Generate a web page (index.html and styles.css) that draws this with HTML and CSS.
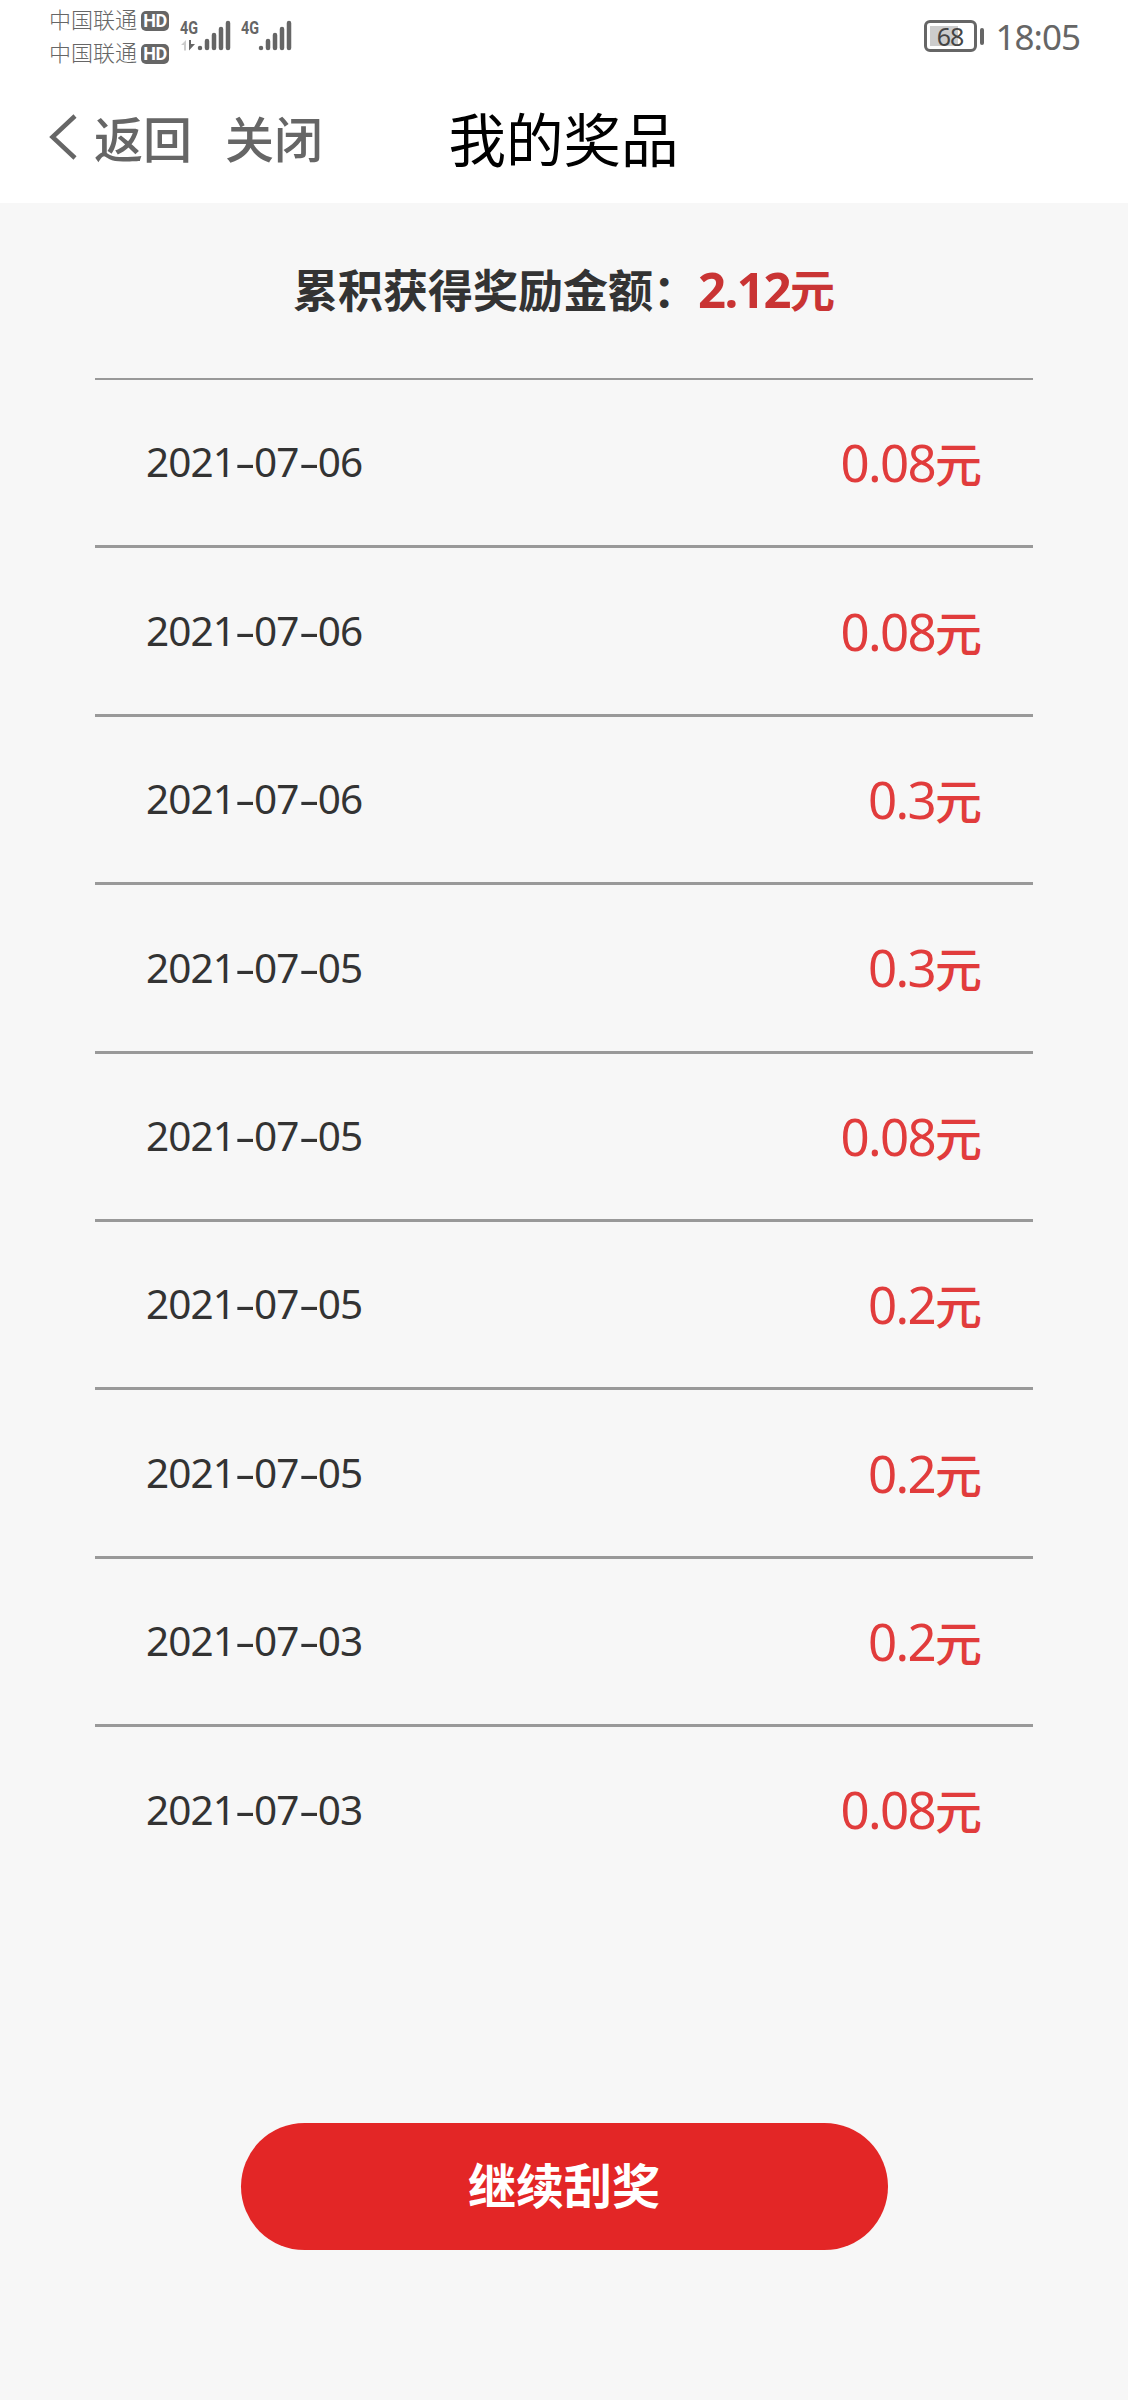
FILE: index.html
```html
<!DOCTYPE html>
<html lang="zh-CN">
<head>
    <meta charset="UTF-8">
    <meta name="viewport" content="width=device-width, initial-scale=1.0">
    <title>我的奖品</title>
    <link rel="stylesheet" href="styles.css">
</head>
<body>
    <div class="status-bar">
        <div class="carriers">
            <div class="carrier"><span class="carrier-name">中国联通</span><span class="hd">HD</span></div>
            <div class="carrier"><span class="carrier-name">中国联通</span><span class="hd">HD</span></div>
        </div>
        <svg class="signals" width="118" height="46" viewBox="-2 -8 118 46">
            <text class="net" x="0" y="16" textLength="18" lengthAdjust="spacingAndGlyphs">4G</text>
            <path class="data-up" d="M1 27 L6 22 V32.500 H4 V27z"/>
            <path class="data-down" d="M9 22 H11 V26 H15 L9 32.500z"/>
            <g class="bars">
                <path d="M20 30v0M27 23v7M34 17v13M41 11v19M48 5v25"/>
            </g>
            <text class="net" x="61" y="16" textLength="18" lengthAdjust="spacingAndGlyphs">4G</text>
            <g class="bars">
                <path d="M81 30v0M88 23v7M95 17v13M102 11v19M109 5v25"/>
            </g>
        </svg>
        <div class="battery">
            <div class="battery-body"><span class="battery-level">68</span></div>
            <div class="battery-tip"></div>
        </div>
        <div class="clock">18:05</div>
    </div>

    <div class="nav-bar">
        <div class="nav-left">
            <svg class="back-icon" width="30" height="48" viewBox="0 0 30 48">
                <path d="M28 3 L5.500 24 L28 45"/>
            </svg>
            <span class="back">返回</span>
            <span class="close">关闭</span>
        </div>
        <h1>我的奖品</h1>
    </div>

    <div class="container">
        <div class="total">累积获得奖励金额：<span class="total-amount"><span class="num">2.12</span>元</span></div>

        <ul class="prize-list">
            <li><span class="date">2021<i>-</i>07<i>-</i>06</span><span class="amount"><span class="num">0.08</span>元</span></li>
            <li><span class="date">2021<i>-</i>07<i>-</i>06</span><span class="amount"><span class="num">0.08</span>元</span></li>
            <li><span class="date">2021<i>-</i>07<i>-</i>06</span><span class="amount"><span class="num">0.3</span>元</span></li>
            <li><span class="date">2021<i>-</i>07<i>-</i>05</span><span class="amount"><span class="num">0.3</span>元</span></li>
            <li><span class="date">2021<i>-</i>07<i>-</i>05</span><span class="amount"><span class="num">0.08</span>元</span></li>
            <li><span class="date">2021<i>-</i>07<i>-</i>05</span><span class="amount"><span class="num">0.2</span>元</span></li>
            <li><span class="date">2021<i>-</i>07<i>-</i>05</span><span class="amount"><span class="num">0.2</span>元</span></li>
            <li><span class="date">2021<i>-</i>07<i>-</i>03</span><span class="amount"><span class="num">0.2</span>元</span></li>
            <li><span class="date">2021<i>-</i>07<i>-</i>03</span><span class="amount"><span class="num">0.08</span>元</span></li>
        </ul>

        <button class="continue-btn">继续刮奖</button>
    </div>
</body>
</html>
```
FILE: styles.css
```css
* {
    box-sizing: border-box;
}

body {
    margin: 0;
    min-height: 2400px;
    background-color: #f7f7f7;
    font-family: "Noto Sans CJK SC", sans-serif;
    color: #333;
}

/* status bar */
.status-bar {
    display: flex;
    height: 74px;
    padding: 0 48px 0 49px;
    background-color: #fff;
    color: #666;
}

.carriers {
    width: 129px;
    padding-top: 4px;
}

.carrier {
    display: flex;
    align-items: center;
    height: 33px;
    font-size: 22px;
    font-weight: 300;
}

.carrier-name {
    padding-bottom: 5px;
}

.hd {
    width: 28px;
    height: 20px;
    margin-left: 4px;
    border-radius: 5px;
    background-color: #666;
    color: #fff;
    font: bold 18px/20px Roboto, sans-serif;
    letter-spacing: -0.5px;
    text-align: center;
}

.signals {
    margin-top: 10px;
}

.net {
    font: bold 19px Roboto, sans-serif;
    fill: #666;
}

.data-up {
    fill: #ccc;
}

.data-down {
    fill: #666;
}

.bars {
    fill: none;
    stroke: #666;
    stroke-width: 4.5;
    stroke-linecap: round;
}

.battery {
    display: flex;
    align-items: center;
    height: 32px;
    margin: 20px 0 0 auto;
}

.battery-body {
    width: 53px;
    height: 32px;
    padding: 3px;
    border: 3px solid #666;
    border-radius: 6px;
}

.battery-level {
    display: block;
    height: 20px;
    background: linear-gradient(to right, #ccc 68%, transparent 68%);
    color: #444;
    font: 25px/20px "Noto Sans", sans-serif;
    letter-spacing: -1px;
    text-align: center;
}

.battery-tip {
    width: 4px;
    height: 17px;
    margin-left: 3px;
    border-radius: 2px;
    background-color: #666;
}

.clock {
    margin-left: 12px;
    font: 35px/74px "Noto Sans", sans-serif;
    letter-spacing: -1px;
}

/* title bar */
.nav-bar {
    display: grid;
    grid-template-columns: 1fr auto 1fr;
    align-items: center;
    height: 129px;
    padding: 0 48px 4px 47px;
    background-color: #fff;
}

.nav-left {
    display: flex;
    align-items: center;
    color: #666;
    font-size: 49px;
    font-weight: 500;
    line-height: 1;
}

.back-icon {
    fill: none;
    stroke: #666;
    stroke-width: 4.5;
}

.back {
    margin-left: 17px;
}

.close {
    margin-left: 33px;
}

h1 {
    margin: 0;
    padding-top: 3px;
    color: #000;
    font-size: 57.5px;
    font-weight: 400;
    line-height: 1;
}

.num {
    font-family: "Noto Sans", sans-serif;
}

.container {
    width: 938px;
    margin: 0 auto;
}

.total {
    height: 175px;
    font-size: 45px;
    font-weight: bold;
    line-height: 171px;
    text-align: center;
}

.total-amount {
    color: #c93434;
}

.total .num {
    font-size: 49px;
    letter-spacing: -1.5px;
    line-height: 1;
}

/* prize records */
.prize-list {
    margin: 0;
    padding: 0;
    border-top: 2px solid #999;
    list-style: none;
}

.prize-list li {
    display: flex;
    justify-content: space-between;
    align-items: center;
    height: 168.4px;
    padding: 0 51px;
    border-bottom: 3px solid #999;
}

.prize-list li:last-child {
    border-color: transparent;
}

.date {
    font: 40.5px/1 "Noto Sans", sans-serif;
    letter-spacing: -0.9px;
}

/* wider dash between the date parts */
.date i {
    display: inline-block;
    width: 19px;
    font-style: normal;
    text-align: center;
    transform: scaleX(1.6);
}

.amount {
    color: #e13c3c;
    font-size: 47px;
    font-weight: 500;
    line-height: 1;
}

.amount .num {
    font-size: 51px;
    font-weight: 400;
    letter-spacing: -1.7px;
    line-height: 1;
}

.continue-btn {
    display: block;
    width: 647px;
    height: 127px;
    margin: 227px auto 0;
    padding: 0 0 6px;
    border: none;
    border-radius: 64px;
    background-color: #e32626;
    color: #fff;
    font-family: inherit;
    font-size: 48px;
    font-weight: bold;
}
```
